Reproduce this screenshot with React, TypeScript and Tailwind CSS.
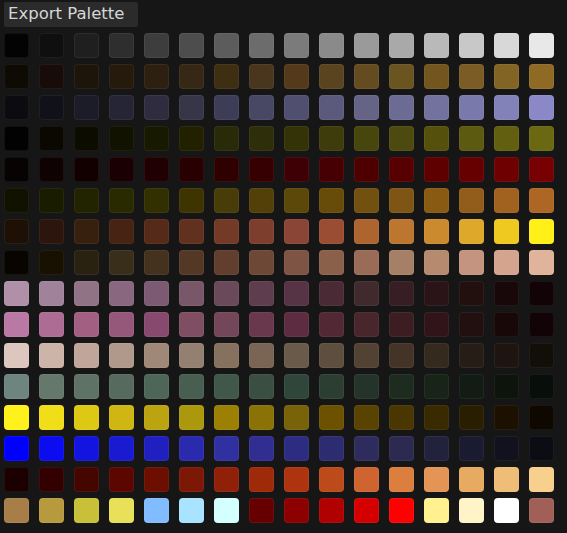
import React from "react";

const rows: string[][] = [
  ["#030303","#0f0f0f","#1f1f1f","#2e2e2e","#3d3d3d","#4d4d4d","#5c5c5c","#6c6c6c","#7b7b7b","#8a8a8a","#9a9a9a","#a9a9a9","#b9b9b9","#c8c8c8","#d8d8d8","#e8e8e8"],
  ["#0e0a04","#170c0a","#1d1509","#261a0c","#2d2010","#362814","#3e2e12","#4a361c","#54391a","#5a4420","#654c20","#6a5420","#72561e","#7a5c24","#826425","#8e6a24"],
  ["#0c0b10","#111119","#1c1b28","#262535","#2e2c3e","#373649","#3e3d57","#484764","#514f70","#5c5a7c","#656486","#6c6b93","#73729f","#7a79ab","#8382b8","#8b88c8"],
  ["#020202","#0a0800","#0d0c00","#121200","#171a00","#212100","#282a08","#2e2e0a","#343308","#3e3c0a","#47460c","#4d4a10","#55510c","#5c5910","#635f10","#6a6810"],
  ["#070303","#0e0202","#120000","#1a0002","#200002","#280002","#2e0000","#360002","#3e0004","#460004","#4e0000","#560002","#5e0000","#660000","#6e0002","#760002"],
  ["#121200","#1a1c00","#222400","#2a2a00","#323000","#3e3400","#483c08","#524008","#5c4808","#664c08","#725010","#7e5514","#885a12","#925c1a","#a0621e","#ae6624"],
  ["#1f1006","#2c150c","#38200f","#462312","#562a18","#62301e","#733a26","#7e3e2e","#8b4536","#9b4d34","#ae642e","#bc7630","#cc8a2e","#dea82a","#efc820","#fff018"],
  ["#080400","#181000","#2a2210","#382e1a","#44321e","#543826","#623e2e","#6e4836","#7e5444","#8a604a","#9a6c58","#a68066","#b68a6e","#c49480","#d4a48e","#e0b49a"],
  ["#b090a8","#a0839a","#917386","#89677e","#7d5a73","#785868","#6a4a5a","#5e3e4e","#563445","#4a2a34","#402a2e","#361e24","#2a1418","#22100e","#18080a","#120406"],
  ["#ba78a4","#ac6c94","#a25f82","#96587a","#88496e","#7f4e62","#74465a","#6a384c","#5e2c40","#522834","#48262c","#3c1e22","#30141a","#221010","#180808","#120406"],
  ["#ddc6be","#cdb4a8","#bfa59a","#b0998a","#a08878","#948070","#86705e","#7a6454","#6a5a4a","#5e4e3e","#524234","#443428","#342a1e","#261e16","#1e1410","#120e08"],
  ["#6e847e","#64786c","#5e7266","#566a5e","#4e6658","#485e50","#40574a","#3a4e42","#30463a","#2c3e32","#24342a","#1e2c20","#182418","#121c14","#0c140c","#080e0a"],
  ["#fff21c","#f0de18","#ddc814","#cfb612","#bca410","#ac980c","#9c8004","#8a7206","#78620a","#6c5200","#584400","#4a3600","#3a2a00","#2a1e00","#1c1000","#0e0800"],
  ["#0000ff","#0c0cf0","#1414e0","#1a1ad0","#2020c0","#2a2aae","#3030a0","#302e90","#2c2c80","#2e2c70","#2e2c5c","#2c2a50","#22223c","#1a1a30","#12121e","#0c0c14"],
  ["#1a0000","#320000","#460600","#5c0600","#6c0e00","#7e1806","#902008","#9e2a0a","#ae3410","#bc4a1a","#d06430","#dc7e3e","#e49454","#e6aa60","#eebe78","#f6d08c"],
  ["#a87e48","#b89a3e","#c8c038","#e8e058","#80bcff","#a8e4ff","#d4ffff","#660000","#8c0000","#b00000","#d40000","#ff0000","#fff090","#fff4c8","#ffffff","#a06058"],
];

export default function App() {
  return (
    <div className="w-[567px] h-[533px] bg-[#161616] overflow-hidden pt-[2px] pl-[4px] flex flex-col gap-[6px]">
      <div className="self-start w-[134px] h-[25px] pl-[4px] bg-[#2b2b2b] rounded-[2px] flex items-center text-[#d6d6d6] text-[16.5px] leading-none whitespace-nowrap" style={{ fontFamily: '"DejaVu Sans", "Open Sans", sans-serif' }}>
        Export Palette
      </div>
      <div className="grid grid-cols-[repeat(16,25px)] gap-x-[10px] gap-y-[6px]">
        {rows.flat().map((c, i) => (
          <div
            key={i}
            className="w-[25px] h-[25px] rounded-[4px] border border-white/[0.06]"
            style={{ backgroundColor: c }}
          />
        ))}
      </div>
    </div>
  );
}
